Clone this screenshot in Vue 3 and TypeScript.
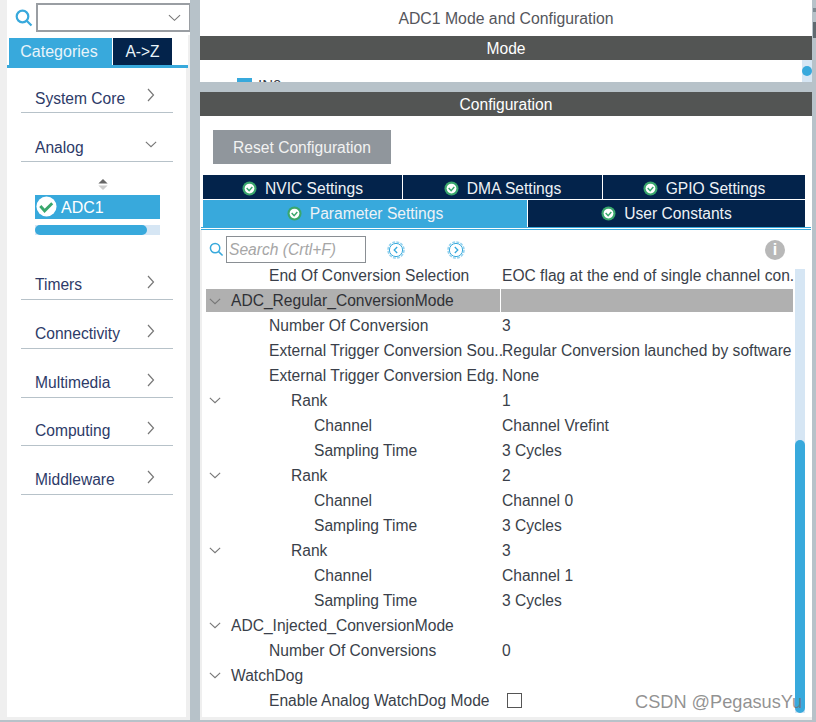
<script setup lang="ts">
interface Row {
  label: string;
  value?: string;
  indent: number;
  chevron?: boolean;
  selected?: boolean;
  check?: boolean;
}

const before = [{ name: 'System Core', open: false }, { name: 'Analog', open: true }];
const after = ['Timers', 'Connectivity', 'Multimedia', 'Computing', 'Middleware'];

const rows: Row[] = [
  { label: 'End Of Conversion Selection', value: 'EOC flag at the end of single channel con..', indent: 63 },
  { label: 'ADC_Regular_ConversionMode', value: '', indent: 25, chevron: true, selected: true },
  { label: 'Number Of Conversion', value: '3', indent: 63 },
  { label: 'External Trigger Conversion Sou..', value: 'Regular Conversion launched by software', indent: 63 },
  { label: 'External Trigger Conversion Edg.', value: 'None', indent: 63 },
  { label: 'Rank', value: '1', indent: 85, chevron: true },
  { label: 'Channel', value: 'Channel Vrefint', indent: 108 },
  { label: 'Sampling Time', value: '3 Cycles', indent: 108 },
  { label: 'Rank', value: '2', indent: 85, chevron: true },
  { label: 'Channel', value: 'Channel 0', indent: 108 },
  { label: 'Sampling Time', value: '3 Cycles', indent: 108 },
  { label: 'Rank', value: '3', indent: 85, chevron: true },
  { label: 'Channel', value: 'Channel 1', indent: 108 },
  { label: 'Sampling Time', value: '3 Cycles', indent: 108 },
  { label: 'ADC_Injected_ConversionMode', value: '', indent: 25, chevron: true },
  { label: 'Number Of Conversions', value: '0', indent: 63 },
  { label: 'WatchDog', value: '', indent: 25, chevron: true },
  { label: 'Enable Analog WatchDog Mode', indent: 63, check: true },
];

const topTabs = ['NVIC Settings', 'DMA Settings', 'GPIO Settings'];
</script>

<template>
  <div class="app">
    <aside class="side">
      <div class="side-search">
        <svg class="lens" viewBox="0 0 18 18" width="18" height="18">
          <circle cx="7.5" cy="7.5" r="5.8" fill="none" stroke="#38a9dc" stroke-width="2.2" />
          <path d="M12 12l4.5 4.5" stroke="#38a9dc" stroke-width="2.2" fill="none" />
        </svg>
        <div class="combo">
          <svg viewBox="0 0 14 8" width="13" height="8">
            <path d="M1 1l6 5.5L13 1" fill="none" stroke="#777" stroke-width="1.2" />
          </svg>
        </div>
      </div>
      <div class="side-tabs">
        <div class="stab on">Categories</div>
        <div class="stab off">A-&gt;Z</div>
      </div>
      <div class="side-list">
        <div v-for="c in before" :key="c.name" class="cat">
          <span>{{ c.name }}</span>
          <svg v-if="c.open" class="chev-down" viewBox="0 0 14 8" width="12" height="7">
            <path d="M1 1l6 5.5L13 1" fill="none" stroke="#777" stroke-width="1.3" />
          </svg>
          <svg v-else class="chev-right" viewBox="0 0 8 14" width="8" height="14">
            <path d="M1 1l5.5 6L1 13" fill="none" stroke="#777" stroke-width="1.2" />
          </svg>
        </div>
        <div class="analog-body">
          <svg class="updown" viewBox="0 0 12 14" width="12" height="13">
            <path d="M6 1l5 5H1z" fill="#666" />
            <path d="M6 13l5-5H1z" fill="#ccc" />
          </svg>
          <div class="adc">
            <svg viewBox="0 0 22 22" width="21" height="21">
              <circle cx="11" cy="11" r="10.5" fill="#fff" />
              <path d="M4.5 10.5l4.5 5 8-8" fill="none" stroke="#3aa76d" stroke-width="3" />
            </svg>
            <span>ADC1</span>
          </div>
          <div class="hbar"><div class="hthumb"></div></div>
        </div>
        <div v-for="c in after" :key="c" class="cat">
          <span>{{ c }}</span>
          <svg class="chev-right" viewBox="0 0 8 14" width="8" height="14">
            <path d="M1 1l5.5 6L1 13" fill="none" stroke="#777" stroke-width="1.2" />
          </svg>
        </div>
      </div>
    </aside>

    <div class="vsplit"></div>

    <main class="main">
      <div class="title">ADC1 Mode and Configuration</div>
      <div class="band">Mode</div>
      <div class="mode-body">
        <div class="in0"><i></i><span>IN0</span></div>
        <div class="mode-scroll"><b></b></div>
      </div>
      <div class="hsplit"></div>
      <div class="band">Configuration</div>
      <div class="cfg">
        <div class="reset">Reset Configuration</div>
        <div class="tabs top">
          <div v-for="t in topTabs" :key="t" class="tab">
            <svg viewBox="0 0 16 16" width="15" height="15">
              <circle cx="8" cy="8" r="7.5" fill="#3aa76d" />
              <circle cx="8" cy="8" r="5.2" fill="#fff" />
              <path d="M5 7.5l2.6 2.8L11 6.4" fill="none" stroke="#3aa76d" stroke-width="1.6" />
            </svg>
            <span>{{ t }}</span>
          </div>
        </div>
        <div class="tabs bottom">
          <div class="tab act">
            <svg viewBox="0 0 16 16" width="15" height="15">
              <circle cx="8" cy="8" r="7.5" fill="#3aa76d" />
              <circle cx="8" cy="8" r="5.2" fill="#fff" />
              <path d="M5 7.5l2.6 2.8L11 6.4" fill="none" stroke="#3aa76d" stroke-width="1.6" />
            </svg>
            <span>Parameter Settings</span>
          </div>
          <div class="tab user">
            <svg viewBox="0 0 16 16" width="15" height="15">
              <circle cx="8" cy="8" r="7.5" fill="#3aa76d" />
              <circle cx="8" cy="8" r="5.2" fill="#fff" />
              <path d="M5 7.5l2.6 2.8L11 6.4" fill="none" stroke="#3aa76d" stroke-width="1.6" />
            </svg>
            <span>User Constants</span>
          </div>
        </div>
        <div class="tab-line"></div>
        <div class="lower">
          <div class="toolbar">
            <svg class="lens2" viewBox="0 0 16 16" width="15" height="15">
              <circle cx="6.5" cy="6.5" r="5" fill="none" stroke="#38a9dc" stroke-width="1.6" />
              <path d="M10 10l4.5 4.5" stroke="#38a9dc" stroke-width="1.6" />
            </svg>
            <div class="search">Search (Crtl+F)</div>
            <svg class="nav n1" viewBox="0 0 18 18" width="18" height="18">
              <circle cx="9" cy="9" r="8" fill="none" stroke="#9ad5f0" stroke-width="1.6" stroke-dasharray="3 1.2" />
              <circle cx="9" cy="9" r="6.6" fill="none" stroke="#38a9dc" stroke-width="1" />
              <path d="M10.2 6L7.2 9l3 3" fill="none" stroke="#38a9dc" stroke-width="1.3" />
            </svg>
            <svg class="nav n2" viewBox="0 0 18 18" width="18" height="18">
              <circle cx="9" cy="9" r="8" fill="none" stroke="#9ad5f0" stroke-width="1.6" stroke-dasharray="3 1.2" />
              <circle cx="9" cy="9" r="6.6" fill="none" stroke="#38a9dc" stroke-width="1" />
              <path d="M7.8 6l3 3-3 3" fill="none" stroke="#38a9dc" stroke-width="1.3" />
            </svg>
            <div class="info">i</div>
          </div>
          <div class="tree-wrap">
            <div class="tree">
              <div v-for="(r, i) in rows" :key="i" class="row" :class="{ sel: r.selected }">
                <svg v-if="r.chevron" class="tw" viewBox="0 0 14 8" width="12" height="7">
                  <path d="M1 1l6 5.5L13 1" fill="none" stroke="#777" stroke-width="1.3" />
                </svg>
                <div class="lab" :style="{ paddingLeft: r.indent + 'px' }">{{ r.label }}</div>
                <div v-if="r.check" class="box"></div>
                <div v-else class="val">{{ r.value }}</div>
              </div>
            </div>
            <div class="vbar"><div class="vthumb"></div></div>
          </div>
        </div>
      </div>
    </main>

    <div class="rstrip"><i class="tick"></i><i class="grip"></i></div>
    <div class="mark">CSDN @PegasusYu</div>
  </div>
</template>

<style scoped>
.app {
  position: relative;
  display: flex;
  width: 816px;
  height: 722px;
  overflow: hidden;
  background: #fff;
  font-family: "Liberation Sans", Arial, sans-serif;
  font-size: 15.6px;
  color: #3a3f4a;
}
.side {
  width: 190px;
  flex: none;
  box-sizing: border-box;
  display: flex;
  flex-direction: column;
  background: #efefef;
  padding-left: 7px;
  border-bottom: 2px solid #b7c2c9;
}
.side-search {
  display: flex;
  align-items: center;
  height: 29px;
  padding: 3px 0 3px 8px;
  background: #fff;
}
.lens { flex: none; margin-right: 3px; }
.combo {
  flex: 1;
  height: 29px;
  box-sizing: border-box;
  border: 2px solid #9a9ea3;
  border-right-width: 1px;
  display: flex;
  align-items: center;
  justify-content: flex-end;
  padding-right: 8px;
  min-width: 0;
}
.side-tabs {
  display: flex;
  height: 27px;
  padding: 3px 0 0 2px;
  gap: 1px;
  background: #fff;
  border-bottom: 3px solid #38a9dc;
  margin-right: 2px;
}
.stab {
  display: flex;
  align-items: center;
  justify-content: center;
  padding-top: 1px;
  box-sizing: border-box;
  color: #e8f4fa;
  font-size: 16px;
}
.stab.on { width: 103px; background: #38a9dc; padding-right: 3px; }
.stab.off { width: 59px; background: #03234b; font-size: 15.6px; }
.side-list {
  flex: 1;
  width: 179px;
  box-sizing: border-box;
  padding-left: 14px;
  margin-bottom: 3px;
  background: #fff;
}
.cat {
  position: relative;
  width: 152px;
  height: 48.7px;
  box-sizing: border-box;
  border-bottom: 1px solid #b7c2c9;
  display: flex;
  align-items: flex-end;
  padding-left: 14px;
  padding-bottom: 4px;
  color: #2d3a68;
  line-height: 20px;
}
.side-list > .cat:nth-child(-n + 2) { padding-bottom: 3px; }
.side-list > .cat:first-child { height: 45px; }
.chev-right { position: absolute; left: 126px; bottom: 10px; }
.chev-down { position: absolute; left: 124px; bottom: 13px; }
.analog-body {
  height: 90px;
  margin-left: 14px;
  width: 125px;
  display: flex;
  flex-direction: column;
  align-items: flex-start;
}
.updown { margin: 16px 0 0 62px; }
.adc {
  width: 100%;
  height: 24px;
  margin-top: 4px;
  background: #38a9dc;
  color: #fff;
  display: flex;
  align-items: center;
  gap: 4px;
  padding-left: 1px;
  box-sizing: border-box;
  font-size: 16px;
}
.adc span { padding-top: 2px; }
.hbar {
  width: 100%;
  height: 10px;
  margin-top: 6px;
  background: #d6e6f4;
}
.hthumb {
  width: 112px;
  height: 100%;
  background: #38a9dc;
  border-radius: 5px;
}
.vsplit { width: 10px; flex: none; background: #b7c2c9; }
.main {
  width: 612px;
  flex: none;
  display: flex;
  flex-direction: column;
  border-bottom: 2px solid #b7c2c9;
  box-sizing: border-box;
}
.title {
  height: 36px;
  flex: none;
  padding-top: 1px;
  box-sizing: border-box;
  display: flex;
  align-items: center;
  justify-content: center;
  color: #55565c;
  font-size: 15.8px;
}
.band {
  height: 24px;
  flex: none;
  padding-top: 1px;
  box-sizing: border-box;
  background: #535554;
  color: #fff;
  display: flex;
  align-items: center;
  justify-content: center;
}
.mode-body {
  position: relative;
  height: 22px;
  overflow: hidden;
  flex: none;
}
.in0 {
  position: absolute;
  left: 37px;
  top: 18px;
  display: flex;
  gap: 6px;
  font-size: 15px;
  line-height: 14px;
}
.in0 i {
  display: block;
  width: 15px;
  height: 15px;
  background: #38a9dc;
}
.mode-scroll {
  position: absolute;
  right: 0;
  top: 0;
  width: 10px;
  height: 22px;
  background: #d6e6f4;
}
.mode-scroll b {
  display: block;
  width: 10px;
  height: 10px;
  margin-top: 6px;
  border-radius: 50%;
  background: #38a9dc;
}
.hsplit { height: 10px; flex: none; background: #b7c2c9; }
.cfg {
  flex: 1;
  min-height: 0;
  display: flex;
  flex-direction: column;
  padding-left: 3px;
  overflow: hidden;
}
.reset {
  width: 178px;
  height: 34px;
  margin-top: 14px;
  margin-left: 10px;
  padding-top: 1px;
  box-sizing: border-box;
  background: #90969c;
  color: #f2f2f2;
  display: flex;
  align-items: center;
  justify-content: center;
  flex: none;
}
.tabs {
  display: flex;
  width: 602px;
  flex: none;
  color: #eef2f6;
}
.tabs.top { height: 24px; margin-top: 11px; gap: 1px; }
.tabs.bottom { height: 27px; margin-top: 1px; gap: 1px; }
.tab {
  flex: 1;
  background: #03234b;
  display: flex;
  align-items: center;
  justify-content: center;
  gap: 8px;
}
.tabs.top .tab { padding-top: 3px; box-sizing: border-box; flex: none; width: 199px; }
.tabs.top .tab:last-child { width: 202px; }
.tab.act { flex: none; width: 324px; background: #38a9dc; }
.tab-line {
  height: 3px;
  flex: none;
  width: 610px;
  margin-left: -2px;
  border-top: 1px solid #38a9dc;
  border-bottom: 1px solid #38a9dc;
  box-sizing: border-box;
  background: #fff;
}
.lower {
  flex: 1;
  min-height: 0;
  display: flex;
  flex-direction: column;
  margin-left: -3px;
  padding-left: 3px;
  box-shadow: inset 2px 0 0 #efefef;
  border-bottom: 3px solid #efefef;
}
.toolbar {
  position: relative;
  height: 33px;
  flex: none;
  display: flex;
  align-items: flex-start;
  padding-top: 6px;
  box-sizing: border-box;
}
.lens2 { margin: 6px 0 0 6px; flex: none; }
.search {
  width: 140px;
  height: 27px;
  box-sizing: border-box;
  border: 1px solid #8a8f94;
  margin-left: 2px;
  padding-left: 2px;
  font-style: italic;
  color: #a6a6a6;
  display: flex;
  align-items: center;
  flex: none;
}
.nav { position: absolute; top: 11px; }
.nav.n1 { left: 184px; }
.nav.n2 { left: 244px; }
.info {
  position: absolute;
  left: 562px;
  top: 10px;
  width: 20px;
  height: 20px;
  border-radius: 50%;
  background: #b8b8b8;
  color: #fff;
  font-weight: bold;
  font-size: 16px;
  line-height: 20px;
  text-align: center;
}
.tree-wrap {
  position: relative;
  flex: 1;
  min-height: 0;
  overflow: hidden;
}
.tree {
  width: 587px;
  margin-left: 3px;
  font-size: 15.6px;
}
.row {
  position: relative;
  height: 25px;
  box-sizing: border-box;
  display: flex;
  align-items: center;
}
.row.sel { background: #b0b0b0; height: 23px; margin: 1px 0; color: #2f3136; }
.row.sel .val { border-left: 1px solid #fff; align-self: stretch; }
.tw { position: absolute; left: 3px; top: 9px; }
.lab {
  width: 294px;
  box-sizing: border-box;
  flex: none;
  white-space: nowrap;
}
.val {
  flex: 1;
  padding-left: 2px;
  white-space: nowrap;
}
.box {
  width: 15px;
  height: 15px;
  border: 1.5px solid #555;
  margin-left: 7px;
  box-sizing: border-box;
}
.vbar {
  position: absolute;
  left: 592px;
  top: 6px;
  bottom: 4px;
  width: 10px;
  background: #d6e6f4;
}
.vthumb {
  position: absolute;
  top: 171px;
  bottom: 0;
  width: 100%;
  background: #38a9dc;
  border-radius: 5px;
}
.rstrip {
  position: relative;
  width: 4px;
  flex: none;
  background: #b7c2c9;
}
.tick {
  position: absolute;
  left: 1px;
  top: 8px;
  width: 3px;
  height: 4px;
  background: #7d8a92;
}
.grip {
  position: absolute;
  left: 1px;
  top: 22px;
  width: 3px;
  height: 16px;
  background: #5f6a70;
}
.mark {
  position: absolute;
  left: 635px;
  top: 692px;
  font-size: 18.2px;
  color: rgba(110, 110, 110, 0.75);
  pointer-events: none;
  white-space: nowrap;
}
</style>
<style>
html, body { margin: 0; }
</style>
